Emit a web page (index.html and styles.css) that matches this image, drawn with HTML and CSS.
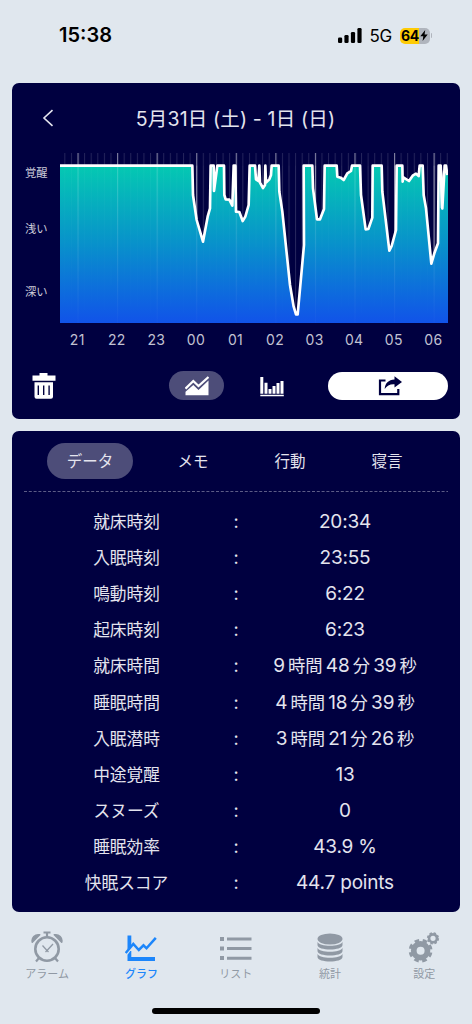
FILE: index.html
```html
<!DOCTYPE html>
<html lang="ja">
<head>
<meta charset="utf-8">
<title>睡眠グラフ</title>
<link rel="stylesheet" href="styles.css">
</head>
<body>
<header class="status">
  <span class="time">15:38</span>
  <div class="status-right">
    <svg class="signal" width="24" height="15" viewBox="0 0 24 15"><rect x="0" y="9.5" width="4.2" height="5.5" rx="1.3"/><rect x="6.4" y="7" width="4.2" height="8" rx="1.3"/><rect x="12.9" y="4" width="4.2" height="11" rx="1.3"/><rect x="19.4" y="0" width="4.2" height="15" rx="1.3"/></svg>
    <span class="net">5G</span>
    <div class="battery"><span>64</span><svg width="8" height="11" viewBox="0 0 8 11"><path d="M5.2 0 0.3 6.2h3L2.6 11 7.7 4.6H4.6z"/></svg></div>
    <i class="cap"></i>
  </div>
</header>

<main>
<section class="card graph-card">
  <div class="title-row">
    <svg class="back" width="12" height="18" viewBox="0 0 12 18"><path d="M10.5 1.2 2 9l8.500 7.800"/></svg>
    <h1>5月31日 (土) - 1日 (日)</h1>
  </div>
  <div class="chart">
    <div class="levels"><span>覚醒</span><span>浅い</span><span>深い</span></div>
    <svg class="plot" width="388" height="170" viewBox="180 459 1164 510">
      <defs>
        <linearGradient id="depth" x1="0" y1="497" x2="0" y2="969" gradientUnits="userSpaceOnUse"><stop offset="0" stop-color="#04c9b2"/><stop offset=".5" stop-color="#0891cb"/><stop offset="1" stop-color="#1153e9"/></linearGradient>
        <linearGradient id="fade" x1="0" y1="459" x2="0" y2="969" gradientUnits="userSpaceOnUse"><stop offset="0" stop-color="#fff"/><stop offset="1" stop-color="#fff" stop-opacity=".1"/></linearGradient>
        <pattern id="minor" x="193" y="0" width="19.780" height="2000" patternUnits="userSpaceOnUse"><rect width="3" height="2000" fill="#fff"/></pattern>
        <pattern id="hour" x="232.500" y="0" width="118.700" height="2000" patternUnits="userSpaceOnUse"><rect width="3.500" height="2000" fill="#fff"/></pattern>
        <mask id="fadeMask" maskUnits="userSpaceOnUse" x="180" y="459" width="1164" height="510"><rect x="180" y="459" width="1164" height="510" fill="url(#fade)"/></mask>
        <path id="sleep" d="M180 497H577L579 585 590 660 609 725 623 650 630 625 632 497H641L642 573 652 497H672L673 585 677 598 688 599 697 617 701 497H706L708 635 718 636 728 663 736 650 746 615 749 497H765L768 538 775 543 778 497 780 548 789 564 795 555 796 497 798 548 808 538 813 525 815 497H836L838 575 847 635 870 855 881 920 888 943H893L912 735 911 497H937L939 565 951 658H960L972 627 974 497H1010L1012 530 1022 533 1031 540 1042 520 1053 513 1056 497H1080L1083 585 1097 688 1105 687 1117 653 1118 497H1145L1147 575 1168 752 1175 738 1188 690 1190 497H1207L1208 545 1210 532 1227 543 1238 527 1248 521 1256 528 1259 497H1268L1271 585 1278 625 1294 791 1303 760 1314 730 1316 497H1322L1327 625 1334 497H1338L1342 525"/>
      </defs>
      <g opacity=".14"><rect x="180" y="459" width="1164" height="510" fill="url(#minor)"/></g>
      <g opacity=".42"><rect x="180" y="459" width="1164" height="510" fill="url(#hour)"/></g>
      <path fill="url(#depth)" d="M180 497H577L579 585 590 660 609 725 623 650 630 625 632 497H641L642 573 652 497H672L673 585 677 598 688 599 697 617 701 497H706L708 635 718 636 728 663 736 650 746 615 749 497H765L768 538 775 543 778 497 780 548 789 564 795 555 796 497 798 548 808 538 813 525 815 497H836L838 575 847 635 870 855 881 920 888 943H893L912 735 911 497H937L939 565 951 658H960L972 627 974 497H1010L1012 530 1022 533 1031 540 1042 520 1053 513 1056 497H1080L1083 585 1097 688 1105 687 1117 653 1118 497H1145L1147 575 1168 752 1175 738 1188 690 1190 497H1207L1208 545 1210 532 1227 543 1238 527 1248 521 1256 528 1259 497H1268L1271 585 1278 625 1294 791 1303 760 1314 730 1316 497H1322L1327 625 1334 497H1338L1344 525V969H180Z"/>
      <g mask="url(#fadeMask)"><rect x="180" y="497" width="1164" height="472" fill="url(#minor)" opacity=".04"/><rect x="180" y="497" width="1164" height="472" fill="url(#hour)" opacity=".18"/></g>
      <use href="#sleep" fill="none" stroke="#fff" stroke-width="8" stroke-linejoin="round"/>
      <path fill="#fff" d="M1319 497h6l6 60-4 72-5-5zM776 497h4l1 48h-6z"/>
    </svg>
  </div>
  <div class="hours"><span>21</span><span>22</span><span>23</span><span>00</span><span>01</span><span>02</span><span>03</span><span>04</span><span>05</span><span>06</span></div>
  <div class="tools">
    <svg class="trash" width="24" height="26" viewBox="0 0 24 26"><path fill="#fff" fill-rule="evenodd" d="M7.500 0h8v2.500H23.500V7.700H.5V2.500h7zM2.500 9.200h18.500v14.600q0 2-2 2H4.500q-2 0-2-2zM5.600 12.500v9.500h1.400v-9.500zM11 12.500v9.500h1.400v-9.500zM16.400 12.500v9.500h1.400v-9.500z"/></svg>
    <div class="mode"><svg width="24" height="20" viewBox="0 0 24 20"><path fill="#fff" d="M.5 19.300v-3.600L8.300 9l5.200 5L23.500 4.500v14.800z"/><path fill="none" stroke="#fff" stroke-width="2.300" d="M.5 12.700 8.300 5l5.200 5L23.500 1"/></svg></div>
    <svg class="bars" width="24" height="20" viewBox="0 0 24 20"><path fill="#fff" d="M.3 0h3v16.800h-3zM4.500 5.700h3v11.100h-3zM8.500 12h3v4.800h-3zM12.500 9h3v7.800h-3zM16.500 6h3v10.800h-3zM20.500 4h3v12.800h-3zM.3 17.800h23.500v1.500H.3z"/></svg>
    <div class="share"><svg width="24" height="20" viewBox="0 0 24 20"><path fill="none" stroke="#000040" stroke-width="2.200" d="M7.500 4.500H2v13.700h18.300V13"/><path fill="#000040" d="M16.500.3 24 6l-7.500 5.500V8.300C12 8 9 9.600 6.700 13 6.900 7.500 10.500 4 16.500 3.600z"/></svg></div>
  </div>
</section>

<section class="card data-card">
  <nav class="tabs"><span class="on">データ</span><span>メモ</span><span>行動</span><span>寝言</span></nav>
  <svg class="rule" width="424" height="1"><path d="M0 .5h424"/></svg>
  <dl>
    <div><dt>就床時刻</dt><i>:</i><dd>20:34</dd></div>
    <div><dt>入眠時刻</dt><i>:</i><dd>23:55</dd></div>
    <div><dt>鳴動時刻</dt><i>:</i><dd>6:22</dd></div>
    <div><dt>起床時刻</dt><i>:</i><dd>6:23</dd></div>
    <div><dt>就床時間</dt><i>:</i><dd>9<b>時間</b>48<b>分</b>39<b>秒</b></dd></div>
    <div><dt>睡眠時間</dt><i>:</i><dd>4<b>時間</b>18<b>分</b>39<b>秒</b></dd></div>
    <div><dt>入眠潜時</dt><i>:</i><dd>3<b>時間</b>21<b>分</b>26<b>秒</b></dd></div>
    <div><dt>中途覚醒</dt><i>:</i><dd>13</dd></div>
    <div><dt>スヌーズ</dt><i>:</i><dd>0</dd></div>
    <div><dt>睡眠効率</dt><i>:</i><dd>43.9 %</dd></div>
    <div><dt>快眠スコア</dt><i>:</i><dd>44.7 points</dd></div>
  </dl>
</section>
</main>

<nav class="tabbar">
  <div><svg width="32" height="32" viewBox="0 0 32 32" fill="none" stroke="#9099a4"><circle cx="16" cy="18" r="11.700" stroke-width="2.600"/><path stroke-width="2.200" d="M12.500 1.500h7M16 1.500V6M8 27l-3 3.500M24 27l3 3.500"/><path stroke-width="1.300" d="m11.500 14.500 4.500 5 6-6.500M14.500 21l1.500-1.500 1.500 1.500"/><path fill="#9099a4" stroke-width="1.500" stroke-linejoin="round" d="M1.300 11.300C.2 7 4 2.800 8.700 3.800zM30.700 11.300C31.800 7 28 2.800 23.300 3.800z"/></svg><span>アラーム</span></div>
  <div class="active"><svg width="32" height="32" viewBox="0 0 32 32"><path fill="#1c86fb" d="M2.500 4.500h3.800v10l-3.800 4zM2.500 23.800 5.300 20h1v6H30v4H2.500z"/><path fill="none" stroke="#1c86fb" stroke-width="2.500" d="m.7 22 7.600-9 5.500 6 4.700-4.700 3 3L30.800 6.800"/></svg><span>グラフ</span></div>
  <div><svg width="32" height="32" viewBox="0 0 32 32" fill="#9099a4"><path d="M0 6h4v4H0zM0 15.500h4v4H0zM0 25h4v4H0zM7 6.500h24.500v3H7zM7 16h24.500v3H7zM7 25.700h24.500v3H7z"/></svg><span>リスト</span></div>
  <div><svg width="32" height="32" viewBox="0 0 32 32" fill="#9099a4"><ellipse cx="16" cy="8" rx="12.500" ry="5.500"/><path id="disk" d="M3.500 10.800C5 16.200 27 16.200 28.500 10.800V14C28.500 20 3.500 20 3.500 14z"/><use href="#disk" y="6"/><use href="#disk" y="12"/></svg><span>統計</span></div>
  <div><svg width="32" height="32" viewBox="0 0 32 32" fill="none" stroke="#9099a4"><circle cx="12.600" cy="19.700" r="6.850" stroke-width="5.700"/><circle cx="12.600" cy="19.700" r="10.400" stroke-width="3" stroke-dasharray="4.600 3.568" stroke-dashoffset="-1.800"/><circle cx="25" cy="7.300" r="3.900" stroke-width="2.600"/><circle cx="25" cy="7.300" r="5.300" stroke-width="1.600" stroke-dasharray="2.400 1.763"/></svg><span>設定</span></div>
</nav>
<div class="home"></div>
</body>
</html>
```

FILE: styles.css
```css
* { box-sizing: border-box; margin: 0; padding: 0; }
body { width: 472px; height: 1024px; overflow: hidden; background: #e0e7ee; font-family: Inter, "Noto Sans CJK JP", sans-serif; display: flex; flex-direction: column; }
svg { display: block; flex: none; }
i, b { font-style: normal; font-weight: 400; }
.status { height: 83px; flex: none; padding: 22px 40px 0 59px; display: flex; justify-content: space-between; align-items: flex-start; }
.time { font-size: 20px; line-height: 27px; font-weight: 600; letter-spacing: 0; }
.status-right { height: 27px; display: flex; align-items: center; }
.net { font-size: 17px; margin-left: 8px; width: 22px; letter-spacing: -.4px; }
.battery { margin-left: 8px; width: 30px; height: 16px; border-radius: 5px; background: linear-gradient(90deg, #fecb05 65%, #b0b5bd 65%); display: flex; align-items: center; justify-content: center; font-size: 14px; font-weight: 700; letter-spacing: -.2px; gap: 1px; }
.cap { width: 1.500px; height: 5px; margin-left: 1px; border-radius: 0 2px 2px 0; background: #b0b5bd; }
main { padding: 0 12px; display: flex; flex-direction: column; gap: 12px; }
.card { background: #000040; border-radius: 7px; color: #e4e4ee; }
.graph-card { height: 336px; }
.title-row { height: 70px; display: flex; align-items: center; padding-left: 30px; }
.back { fill: none; stroke: #e4e4ee; stroke-width: 1.600; }
h1 { flex: 1; font-size: 19.500px; line-height: 28px; font-weight: 400; text-align: center; padding: 2px 43px 0 0; letter-spacing: .15px; white-space: nowrap; }
.chart { display: flex; height: 170px; }
.levels { width: 48px; padding: 11px 0 0 13px; display: flex; flex-direction: column; font-size: 11.300px; line-height: 18px; color: #ccccda; }
.levels span:nth-child(2) { margin-top: 38px; }
.levels span:nth-child(3) { margin-top: 45px; }
.hours { display: flex; padding-left: 45.500px; height: 32px; align-items: center; font-size: 14px; color: #c2c2d2; letter-spacing: .3px; }
.hours span { width: 39.570px; text-align: center; flex: none; }
.tools { height: 61px; display: flex; align-items: center; padding: 0 12px 0 20px; }
.mode { margin-left: 113px; width: 55px; height: 29px; border-radius: 15px; background: #4d4d79; display: flex; align-items: center; justify-content: center; }
.bars { margin: 3px 0 0 36px; }
.share { margin-left: 44px; width: 120px; height: 28px; border-radius: 14px; background: #fff; display: flex; align-items: center; justify-content: center; padding-left: 3px; }
.data-card { height: 481px; padding: 12px; }
.tabs { display: grid; grid-template-columns: 86px 120px 74px 120px; height: 36px; padding-left: 23px; }
.tabs span { height: 36px; line-height: 38px; text-align: center; font-size: 15.500px; border-radius: 18px; }
.tabs .on { background: #4d4d79; }
.rule { margin-top: 11.500px; fill: none; stroke: #5c5c86; stroke-dasharray: 3 1.800; }
dl { margin-top: 12.500px; }
dl div { height: 36.100px; display: grid; grid-template-columns: 205px 14px 204px; align-items: center; text-align: center; }
dt { font-size: 16.700px; line-height: 24px; }
dl i { font-size: 18px; line-height: 24px; }
dd { font-size: 19px; line-height: 24px; white-space: nowrap; letter-spacing: -.2px; }
dd b { font-size: 17.300px; margin: 0 3.200px; letter-spacing: 0; }
dd b:last-child { margin-right: 0; }
.tabbar { height: 96px; flex: none; display: flex; padding-top: 19px; }
.tabbar div { width: 94.300px; display: flex; flex-direction: column; align-items: center; color: #9099a4; font-size: 11px; line-height: 16px; gap: 3px; }
.tabbar .active { color: #1c86fb; font-weight: 500; }
.home { width: 168px; height: 6px; border-radius: 3px; background: #000; margin: 0 auto; }
```
